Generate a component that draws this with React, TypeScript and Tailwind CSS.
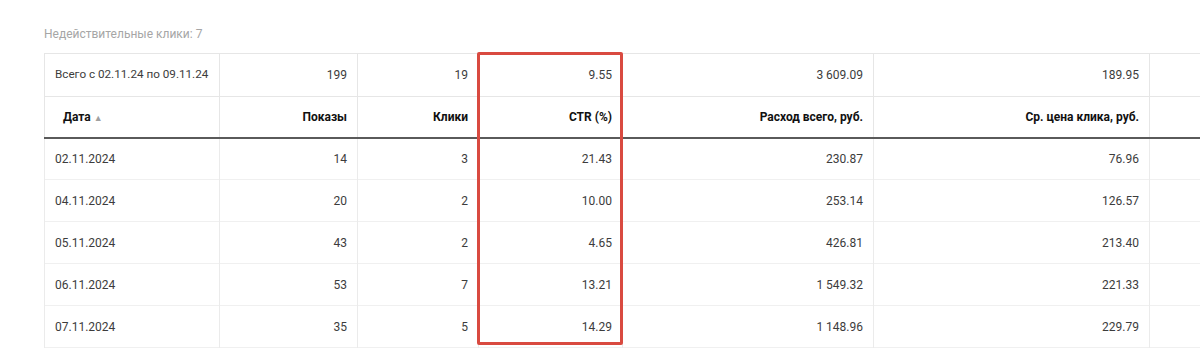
import React from 'react';

const rows = [
  { date: '02.11.2024', shows: 14, clicks: 3, ctr: '21.43', spend: '230.87', cpc: '76.96' },
  { date: '04.11.2024', shows: 20, clicks: 2, ctr: '10.00', spend: '253.14', cpc: '126.57' },
  { date: '05.11.2024', shows: 43, clicks: 2, ctr: '4.65', spend: '426.81', cpc: '213.40' },
  { date: '06.11.2024', shows: 53, clicks: 7, ctr: '13.21', spend: '1 549.32', cpc: '221.33' },
  { date: '07.11.2024', shows: 35, clicks: 5, ctr: '14.29', spend: '1 148.96', cpc: '229.79' },
];

const widths = [175, 138, 121, 144, 251, 276, 220];

const App: React.FC = () => {
  return (
    <div className="w-[1200px] h-[349px] overflow-hidden bg-white font-['Roboto',sans-serif] text-[12px] text-[#3c3c3c] whitespace-nowrap">
      <div className="relative pl-[44px] pt-[26px]">
        {/* Заголовок */}
        <div className="h-[27px] text-[12px] text-[#a6a6a6] leading-[16px]">Недействительные клики: 7</div>

        <table className="table-fixed border-collapse w-[1325px]">
          <colgroup>
            {widths.map((w, i) => (
              <col key={i} style={{ width: w }} />
            ))}
          </colgroup>
          <tbody>
            {/* Итого */}
            <tr className="h-[43px] border-t border-b border-[#e6e6e6]">
              <td className="border-l border-r border-[#e6e6e6] px-[10px] text-[11.7px]">Всего с 02.11.24 по 09.11.24</td>
              <td className="border-r border-[#e6e6e6] px-[10px] text-right">199</td>
              <td className="border-r border-[#e6e6e6] px-[10px] text-right">19</td>
              <td className="border-r border-[#e6e6e6] px-[10px] text-right">9.55</td>
              <td className="border-r border-[#e6e6e6] px-[10px] text-right">3 609.09</td>
              <td className="border-r border-[#e6e6e6] px-[10px] text-right">189.95</td>
              <td className="border-r border-[#e6e6e6]"></td>
            </tr>

            {/* Шапка */}
            <tr className="h-[41px] border-b-2 border-[#5a5a5a] font-bold text-[#111]">
              <td className="border-l border-r border-[#e6e6e6] pl-[18px] pr-[10px]">
                Дата <span className="text-[9px] text-[#a0a0a0] font-normal">▲</span>
              </td>
              <td className="border-r border-[#e6e6e6] px-[10px] text-right">Показы</td>
              <td className="border-r border-[#e6e6e6] px-[10px] text-right">Клики</td>
              <td className="border-r border-[#e6e6e6] px-[10px] text-right">CTR (%)</td>
              <td className="border-r border-[#e6e6e6] px-[10px] text-right">Расход всего, руб.</td>
              <td className="border-r border-[#e6e6e6] px-[10px] text-right">Ср. цена клика, руб.</td>
              <td className="border-r border-[#e6e6e6]"></td>
            </tr>

            {rows.map((r) => (
              <tr key={r.date} className="h-[42px] border-b border-[#f0f0f0]">
                <td className="border-l border-r border-[#ebebeb] px-[10px]">{r.date}</td>
                <td className="border-r border-[#ebebeb] px-[10px] text-right">{r.shows}</td>
                <td className="border-r border-[#ebebeb] px-[10px] text-right">{r.clicks}</td>
                <td className="border-r border-[#ebebeb] px-[10px] text-right">{r.ctr}</td>
                <td className="border-r border-[#ebebeb] px-[10px] text-right">{r.spend}</td>
                <td className="border-r border-[#ebebeb] px-[10px] text-right">{r.cpc}</td>
                <td className="border-r border-[#ebebeb]"></td>
              </tr>
            ))}
          </tbody>
        </table>

        {/* Выделение столбца CTR */}
        <div className="absolute left-[477px] top-[52px] w-[146px] h-[293px] border-[3px] border-[#d94a40] rounded-[2px] pointer-events-none"></div>
      </div>
    </div>
  );
};

export default App;
